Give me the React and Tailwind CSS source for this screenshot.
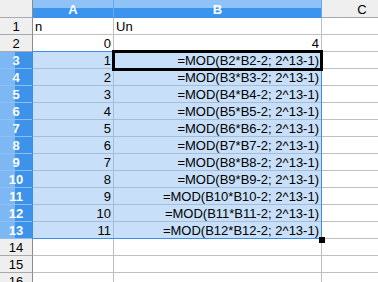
import React from "react";

const ROWS = 16;

function RowHeader({ n, selected }) {
  if (selected) {
    return (
      <div className="w-[33px] h-full shrink-0 box-border border-r border-b border-r-[#3d8ee6] border-b-[#8fbff0] bg-[linear-gradient(to_right,#7db8f4_0,#7db8f4_47%,#3d92ea_47%,#3d92ea_100%)] flex items-center justify-center text-white font-bold">
        {n}
      </div>
    );
  }
  return (
    <div className="w-[33px] h-full shrink-0 box-border border-r border-b border-r-[#8c8c8c] border-b-[#a9a9a9] bg-[#efefef] flex items-center justify-center text-black">
      {n}
    </div>
  );
}

function Cell({ w, children, align = "right", selected }) {
  return (
    <div
      className={
        "h-full shrink-0 box-border border-r border-b flex items-center overflow-visible whitespace-nowrap " +
        w +
        " " +
        (align === "right" ? "justify-end pr-[2px] " : "justify-start pl-[2px] ") +
        (selected ? "bg-[#c7dff8] border-[#a7bdd6]" : "bg-white border-[#c0c0c0]")
      }
    >
      {children}
    </div>
  );
}

export default function App() {
  const rows = [];
  for (let r = 1; r <= ROWS; r++) {
    const sel = r >= 3 && r <= 13;
    let a = null,
      b = null,
      aAlign = "right",
      bAlign = "right";
    if (r === 1) {
      a = "n";
      b = "Un";
      aAlign = "left";
      bAlign = "left";
    } else if (r === 2) {
      a = "0";
      b = "4";
    } else if (sel) {
      a = String(r - 2);
      b = `=MOD(B${r - 1}*B${r - 1}-2; 2^13-1)`;
    }
    rows.push(
      <div key={r} className="flex h-[17px]">
        <RowHeader n={r} selected={sel} />
        <Cell w="w-[81px]" align={aAlign} selected={sel}>
          {a}
        </Cell>
        <Cell w="w-[208px]" align={bAlign} selected={sel}>
          {b}
        </Cell>
        <Cell w="w-[81px]" selected={false}>
          {null}
        </Cell>
      </div>
    );
  }

  return (
    <div className="relative w-[378px] h-[282px] overflow-hidden bg-white text-[13px] leading-none text-black font-['Liberation_Sans',Arial,sans-serif]">
      <div className="flex h-[18px]">
        <div className="w-[33px] h-full shrink-0 box-border border-r border-b border-r-[#8c8c8c] border-b-[#a9a9a9] bg-[#efefef]" />
        <div className="w-[81px] h-full shrink-0 box-border border-r border-b border-r-[#6aa9ee] border-b-[#3d8ee6] bg-[linear-gradient(to_bottom,#8fc3f8_0,#8fc3f8_50%,#3b94ee_50%,#3b94ee_100%)] flex items-center justify-center text-white font-bold pt-px">
          A
        </div>
        <div className="w-[208px] h-full shrink-0 box-border border-r border-b border-r-[#6aa9ee] border-b-[#3d8ee6] bg-[linear-gradient(to_bottom,#8fc3f8_0,#8fc3f8_50%,#3b94ee_50%,#3b94ee_100%)] flex items-center justify-center text-white font-bold pt-px">
          B
        </div>
        <div className="w-[81px] h-full shrink-0 box-border border-r border-b border-r-[#c0c0c0] border-b-[#a9a9a9] bg-[#efefef] flex items-center justify-center text-black pt-px">
          C
        </div>
      </div>
      {rows}
      {/* selection outline */}
      <div className="absolute left-[32px] top-[51px] w-[290px] h-[188px] border border-[#3d8ee6] pointer-events-none" />
      {/* cursor */}
      <div className="absolute left-[112px] top-[50px] w-[211px] h-[21px] border-[3px] border-black pointer-events-none" />
      {/* fill handle */}
      <div className="absolute left-[319px] top-[237px] w-[6px] h-[6px] bg-black" />
    </div>
  );
}
